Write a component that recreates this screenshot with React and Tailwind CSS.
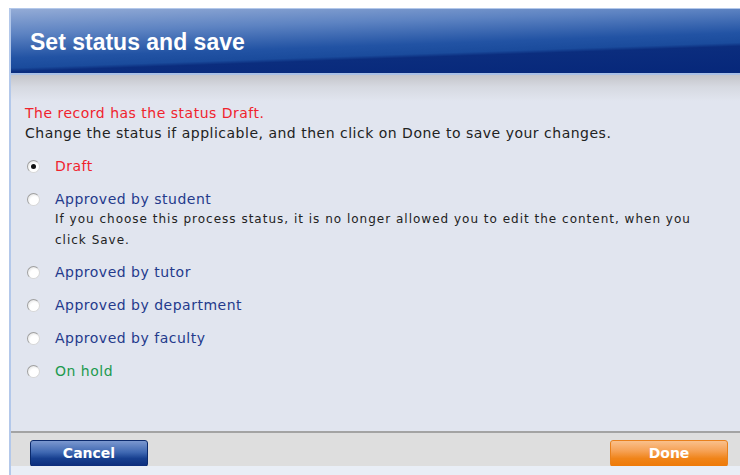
import React from 'react';

// Status options shown in the dialog
const STATUSES = [
  { id: 'draft', label: 'Draft', color: 'text-[#f0232d]', checked: true },
  {
    id: 'student',
    label: 'Approved by student',
    color: 'text-[#243a8c]',
    note: 'If you choose this process status, it is no longer allowed you to edit the content, when you click Save.',
  },
  { id: 'tutor', label: 'Approved by tutor', color: 'text-[#243a8c]' },
  { id: 'department', label: 'Approved by department', color: 'text-[#243a8c]' },
  { id: 'faculty', label: 'Approved by faculty', color: 'text-[#243a8c]' },
  { id: 'hold', label: 'On hold', color: 'text-[#1d9a4e]' },
];

const Radio = ({ checked }) => (
  <span className="mt-[3px] flex h-[13px] w-[13px] shrink-0 items-center justify-center rounded-full border border-[#a0a0a0] border-r-[#d8d8d8] border-b-[#d8d8d8] bg-[radial-gradient(circle_at_60%_65%,#ffffff_45%,#d6d6d6_100%)]">
    {checked && <span className="h-[5px] w-[5px] rounded-full bg-[#111]" />}
  </span>
);

const App = () => {
  return (
    <div className="h-[475px] w-[740px] overflow-hidden bg-white pt-[8px] pl-[9px] font-['DejaVu_Sans',Verdana,sans-serif]">
      <div className="flex h-[467px] flex-col border-l-2 border-t border-[#b3c8ea] bg-[#e1e5ef]">
        {/* Title bar */}
        <div className="flex h-[66px] items-center border-b-2 border-[#a9c0e6] bg-[linear-gradient(178deg,#93abd6_0%,#5d83c2_28%,#2253a4_55%,#1a4b9c_66%,#0b2d7e_70%,#06277a_100%)] pl-[19px] pt-[2px]">
          <h1 className="font-['Liberation_Sans',Arial,sans-serif] text-[23px] font-bold text-white">
            Set status and save
          </h1>
        </div>

        {/* Body */}
        <div className="flex-1 bg-[linear-gradient(180deg,#c4c5ca_0px,#d6d9e1_12px,#e1e5ef_26px)] pl-[14px] pr-4 pt-[28px] text-[14px] tracking-[0.5px]">
          <p className="leading-[20px] text-[#f0232d]">The record has the status Draft.</p>
          <p className="leading-[20px] text-[#222]">
            Change the status if applicable, and then click on Done to save your changes.
          </p>

          <div className="mt-[14px] flex flex-col gap-[14px]">
            {STATUSES.map((s) => (
              <label key={s.id} className="flex items-start gap-[15px] pl-[2px]">
                <Radio checked={s.checked} />
                <div>
                  <div className={`leading-[19px] ${s.color}`}>{s.label}</div>
                  {s.note && (
                    <div className="-mb-[2px] w-[650px] text-[12px] leading-[21px] tracking-[1px] text-[#222]">
                      {s.note}
                    </div>
                  )}
                </div>
              </label>
            ))}
          </div>
        </div>

        {/* Footer with actions */}
        <div className="flex h-[35px] items-start justify-between border-t-2 border-[#a3a3a3] bg-[#dedede] pl-[19px] pr-[12px] pt-[7px]">
          <button className="h-[27px] w-[118px] rounded-[3px] border border-[#0b2a6c] bg-[linear-gradient(180deg,#7b98cf_0%,#3f68b2_45%,#173f8f_70%,#0c2d7c_100%)] text-[14px] font-bold text-white">
            Cancel
          </button>
          <button className="h-[27px] w-[118px] rounded-[3px] border border-[#e8801c] bg-[linear-gradient(180deg,#f9c08c_0%,#f6a154_40%,#f08419_70%,#ee7a08_100%)] text-[14px] font-bold text-white">
            Done
          </button>
        </div>
        <div className="h-[9px] bg-[#e9eef6]" />
      </div>
    </div>
  );
};

export default App;
